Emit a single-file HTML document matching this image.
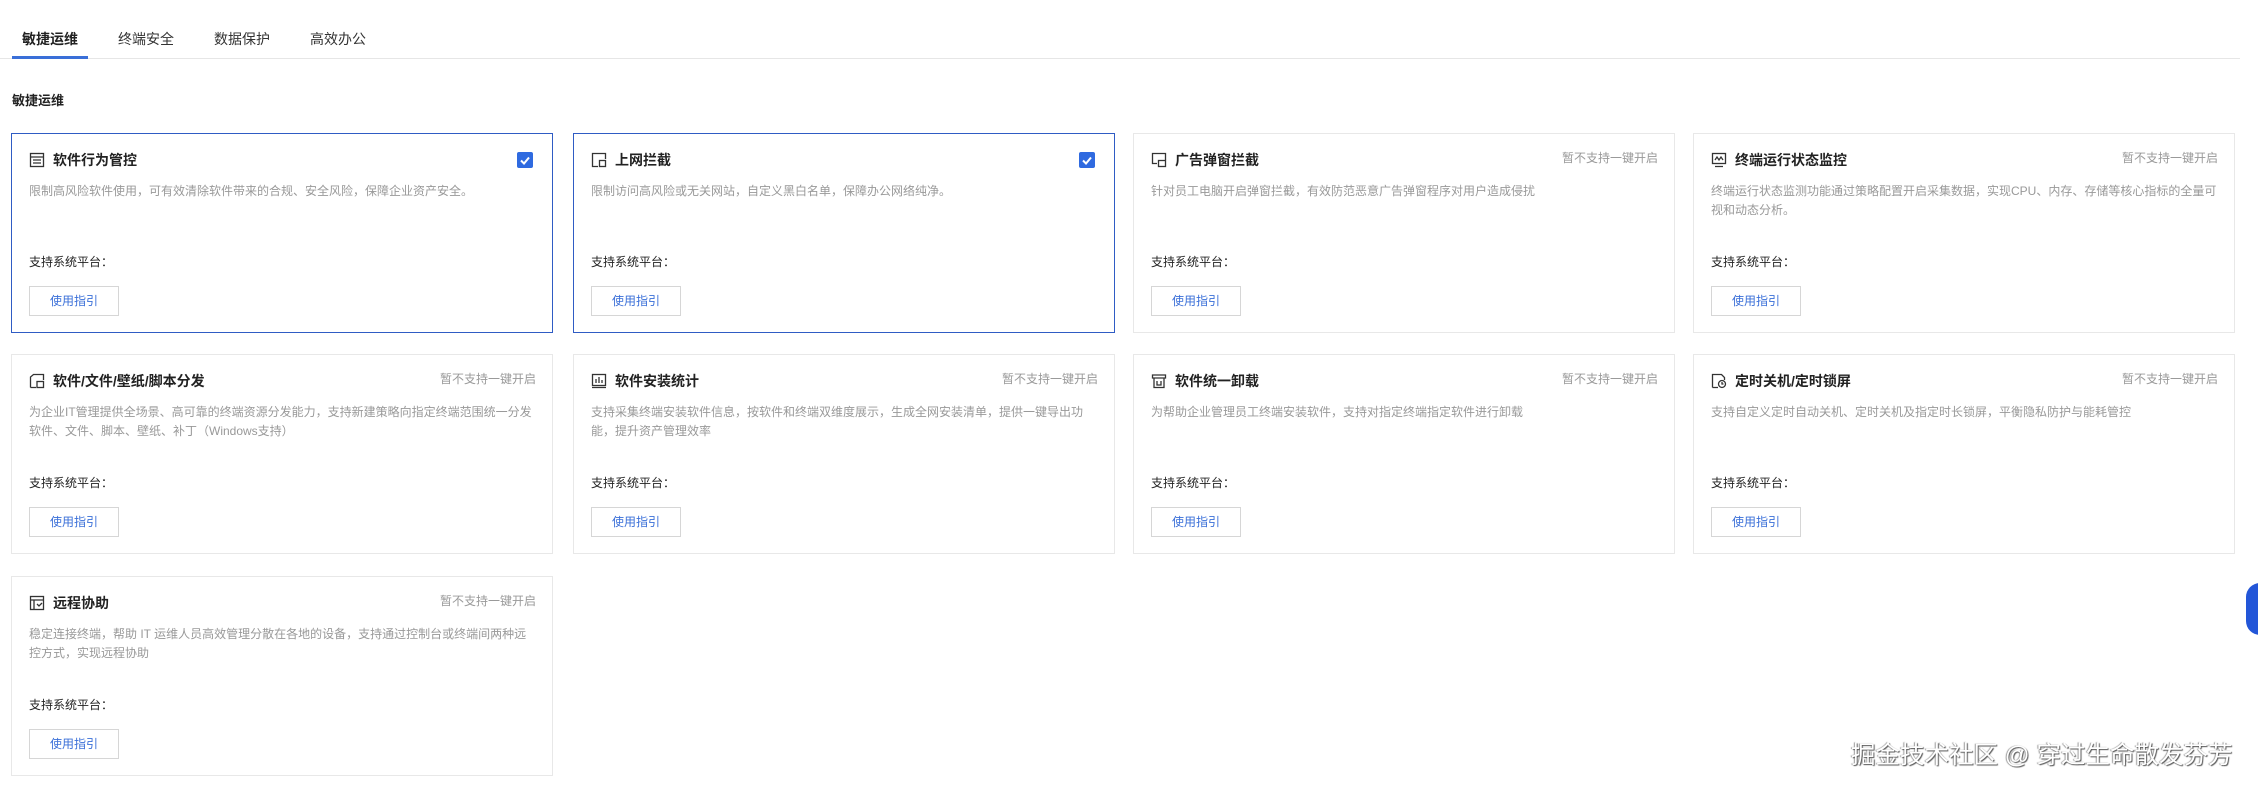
<!DOCTYPE html>
<html><head><meta charset="utf-8"><style>
*{margin:0;padding:0;box-sizing:border-box}
body{width:2258px;height:790px;background:#fff;position:relative;overflow:hidden;font-family:"Liberation Sans","Noto Sans CJK SC",sans-serif;color:#222}
.tab{position:absolute;top:29px;font-size:14px;color:#333;line-height:20px}
.tabline{position:absolute;top:58px;left:0;width:2240px;height:1px;background:#e6e6e6}
.tabact{position:absolute;top:56px;left:12px;width:76px;height:3px;background:#3a6fd8}
.sec{position:absolute;left:12px;top:90px;font-size:13px;font-weight:bold;color:#222}
.card{position:absolute;width:542px;height:200px;border:1px solid #e8e8e8;background:#fff}
.card.sel{border-color:#2f5cc4}
.ic{position:absolute;left:17px;top:18px;width:16px;height:16px}
.t{position:absolute;left:41px;top:16px;font-size:14px;font-weight:600;color:#222;line-height:20px}
.ns{position:absolute;right:16px;top:15px;font-size:12px;color:#999;line-height:18px}
.chk{position:absolute;right:19px;top:18px;width:16px;height:16px;background:#2f6ae0;border-radius:2px}
.d{position:absolute;left:17px;top:48px;width:512px;font-size:12px;color:#999;line-height:19px}
.p{position:absolute;left:17px;top:119px;font-size:12px;color:#222;line-height:18px}
.b{position:absolute;left:17px;top:152px;width:90px;height:30px;border:1px solid #d6d6d6;font-size:12px;color:#3a6fd8;text-align:center;line-height:28px}
.wm{position:absolute;left:1851px;top:736px;font-size:24.5px;color:#fff;text-shadow:1px 1px 1px #555,-1px 0 1px #999}
.blue{position:absolute;left:2246px;top:583px;width:30px;height:52px;background:#2356d8;border-radius:14px}
</style></head><body>
<div class="tab" style="left:22px;color:#222;font-weight:bold">敏捷运维</div>
<div class="tab" style="left:118px">终端安全</div>
<div class="tab" style="left:214px">数据保护</div>
<div class="tab" style="left:310px">高效办公</div>
<div class="tabline"></div><div class="tabact"></div>
<div class="sec">敏捷运维</div>

<div class="card sel" style="left:11px;top:133px">
<svg class="ic" viewBox="0 0 16 16" fill="none" stroke="#333" stroke-width="1.3"><rect x="1.5" y="1.5" width="13" height="13"/><path d="M1.5 5h13M4 8h8M4 11h8"/></svg>
<div class="t">软件行为管控</div><div class="chk"><svg viewBox="0 0 16 16" width="16" height="16"><path d="M4 8.5l3 3 5-6" stroke="#fff" stroke-width="2" fill="none"/></svg></div>
<div class="d">限制高风险软件使用，可有效清除软件带来的合规、安全风险，保障企业资产安全。</div>
<div class="p">支持系统平台：</div><div class="b">使用指引</div></div>

<div class="card sel" style="left:573px;top:133px">
<svg class="ic" viewBox="0 0 16 16" fill="none" stroke="#333" stroke-width="1.3"><path d="M14.5 7V1.5h-13v13H7"/><rect x="8.5" y="8.5" width="6" height="6"/></svg>
<div class="t">上网拦截</div><div class="chk"><svg viewBox="0 0 16 16" width="16" height="16"><path d="M4 8.5l3 3 5-6" stroke="#fff" stroke-width="2" fill="none"/></svg></div>
<div class="d">限制访问高风险或无关网站，自定义黑白名单，保障办公网络纯净。</div>
<div class="p">支持系统平台：</div><div class="b">使用指引</div></div>

<div class="card" style="left:1133px;top:133px">
<svg class="ic" viewBox="0 0 16 16" fill="none" stroke="#333" stroke-width="1.3"><path d="M14.5 8V1.5h-13v10H6"/><rect x="7.5" y="8.5" width="7" height="6"/></svg>
<div class="t">广告弹窗拦截</div><div class="ns">暂不支持一键开启</div>
<div class="d">针对员工电脑开启弹窗拦截，有效防范恶意广告弹窗程序对用户造成侵扰</div>
<div class="p">支持系统平台：</div><div class="b">使用指引</div></div>

<div class="card" style="left:1693px;top:133px">
<svg class="ic" viewBox="0 0 16 16" fill="none" stroke="#333" stroke-width="1.3"><rect x="1.5" y="1.5" width="13" height="10"/><path d="M4 14.5h8M4 8l2-3 2 3 2-3 2 3"/></svg>
<div class="t">终端运行状态监控</div><div class="ns">暂不支持一键开启</div>
<div class="d">终端运行状态监测功能通过策略配置开启采集数据，实现CPU、内存、存储等核心指标的全量可视和动态分析。</div>
<div class="p">支持系统平台：</div><div class="b">使用指引</div></div>

<div class="card" style="left:11px;top:354px">
<svg class="ic" viewBox="0 0 16 16" fill="none" stroke="#333" stroke-width="1.3"><path d="M1.5 14.5V4l3-2.5h10V7M1.5 14.5H7"/><rect x="8" y="8.5" width="6.5" height="6"/></svg>
<div class="t">软件/文件/壁纸/脚本分发</div><div class="ns">暂不支持一键开启</div>
<div class="d" style="width:505px">为企业IT管理提供全场景、高可靠的终端资源分发能力，支持新建策略向指定终端范围统一分发软件、文件、脚本、壁纸、补丁（Windows支持）</div>
<div class="p">支持系统平台：</div><div class="b">使用指引</div></div>

<div class="card" style="left:573px;top:354px">
<svg class="ic" viewBox="0 0 16 16" fill="none" stroke="#333" stroke-width="1.3"><rect x="1.5" y="1.5" width="13" height="11"/><path d="M1 14.5h14M5 10V6M8 10V4M11 10V7"/></svg>
<div class="t">软件安装统计</div><div class="ns">暂不支持一键开启</div>
<div class="d" style="width:505px">支持采集终端安装软件信息，按软件和终端双维度展示，生成全网安装清单，提供一键导出功能，提升资产管理效率</div>
<div class="p">支持系统平台：</div><div class="b">使用指引</div></div>

<div class="card" style="left:1133px;top:354px">
<svg class="ic" viewBox="0 0 16 16" fill="none" stroke="#333" stroke-width="1.3"><path d="M1.5 2h13v3h-13zM3 5v9.5h10V5M6 8v4h4V8"/></svg>
<div class="t">软件统一卸载</div><div class="ns">暂不支持一键开启</div>
<div class="d">为帮助企业管理员工终端安装软件，支持对指定终端指定软件进行卸载</div>
<div class="p">支持系统平台：</div><div class="b">使用指引</div></div>

<div class="card" style="left:1693px;top:354px">
<svg class="ic" viewBox="0 0 16 16" fill="none" stroke="#333" stroke-width="1.3"><path d="M1.5 14.5V1.5h9l3 3V7M1.5 14.5H7"/><circle cx="11" cy="11" r="3.5"/><path d="M11 9v2h1.5"/></svg>
<div class="t">定时关机/定时锁屏</div><div class="ns">暂不支持一键开启</div>
<div class="d">支持自定义定时自动关机、定时关机及指定时长锁屏，平衡隐私防护与能耗管控</div>
<div class="p">支持系统平台：</div><div class="b">使用指引</div></div>

<div class="card" style="left:11px;top:576px">
<svg class="ic" viewBox="0 0 16 16" fill="none" stroke="#333" stroke-width="1.3"><rect x="1.5" y="1.5" width="13" height="13"/><path d="M1.5 5h13M5 5v9.5M8 9l2 2 3-3"/></svg>
<div class="t">远程协助</div><div class="ns">暂不支持一键开启</div>
<div class="d" style="width:505px">稳定连接终端，帮助 IT 运维人员高效管理分散在各地的设备，支持通过控制台或终端间两种远控方式，实现远程协助</div>
<div class="p">支持系统平台：</div><div class="b">使用指引</div></div>

<div class="blue"></div>
<div class="wm">掘金技术社区 @ 穿过生命散发芬芳</div>
</body></html>
